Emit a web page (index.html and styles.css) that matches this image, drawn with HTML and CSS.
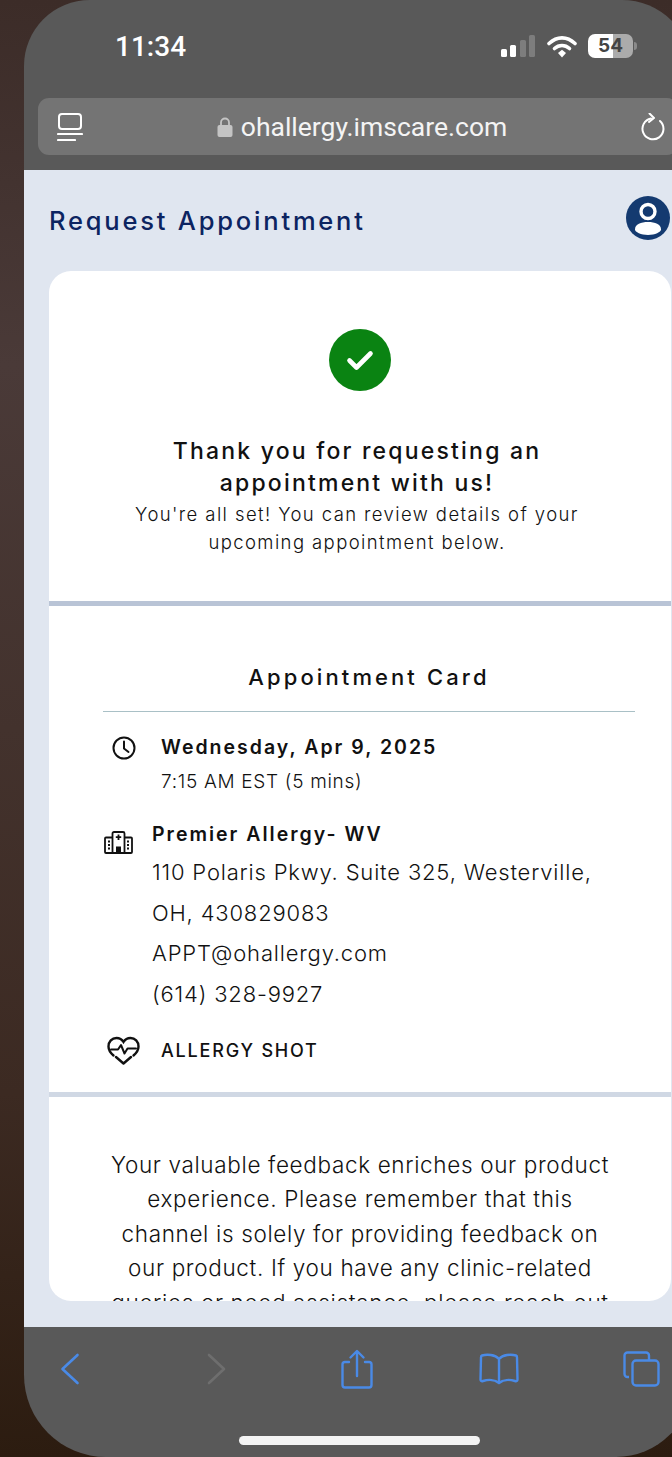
FILE: index.html

```html
<!DOCTYPE html>
<html lang="en">
<head>
    <meta charset="UTF-8">
    <meta name="viewport" content="width=device-width, initial-scale=1.0">
    <title>Request Appointment</title>
    <link rel="stylesheet" href="styles.css">
</head>
<body>
    <div class="phone">
        <div class="top-bar">
            <div class="status-row">
                <span class="clock-time">11:34</span>
                <svg class="signal" viewBox="0 0 34 22" width="34" height="22">
                    <rect x="0" y="14" width="6" height="8" rx="1.5" fill="#fff"/>
                    <rect x="9" y="10" width="6" height="12" rx="1.5" fill="#fff"/>
                    <rect x="19" y="5" width="6" height="17" rx="1.5" fill="#7d7d7d"/>
                    <rect x="28" y="0" width="6" height="22" rx="1.5" fill="#7d7d7d"/>
                </svg>
                <svg class="wifi" viewBox="0 0 30 23" width="30" height="23">
                    <path d="M2 8.5C10 1 20 1 28 8.5" fill="none" stroke="#fff" stroke-width="3.6" stroke-linecap="round"/>
                    <path d="M7.5 13.5C12 9.5 18 9.5 22.5 13.5" fill="none" stroke="#fff" stroke-width="3.6" stroke-linecap="round"/>
                    <path d="M11 18L15 14.8L19 18L15 22.5Z" fill="#fff"/>
                </svg>
                <div class="battery">
                    <span class="battery-body">54</span>
                    <span class="battery-nub"></span>
                </div>
            </div>
            <div class="url-bar">
                <svg viewBox="0 0 26 28" width="26" height="28">
                    <rect x="2" y="1" width="22" height="15" rx="3" fill="none" stroke="#fff" stroke-width="2"/>
                    <path d="M1 21H25M1 27H18" stroke="#fff" stroke-width="2.2" stroke-linecap="round"/>
                </svg>
                <div class="url-text">
                    <svg viewBox="0 0 16 20" width="16" height="20">
                        <path d="M4 9V5.5a4 4 0 0 1 8 0V9" fill="none" stroke="#c4c4c4" stroke-width="1.8"/>
                        <rect x="0.5" y="8" width="15" height="12" rx="2" fill="#c4c4c4"/>
                    </svg>
                    <span>ohallergy.imscare.com</span>
                </div>
                <svg viewBox="0 0 24 28" width="24" height="28">
                    <path d="M10 5.5A10.5 10.5 0 1 0 19 8" fill="none" stroke="#fff" stroke-width="2" stroke-linecap="round"/>
                    <path d="M8.5 0.5L13 5L8 9" fill="none" stroke="#fff" stroke-width="2" stroke-linecap="round" stroke-linejoin="round"/>
                </svg>
            </div>
        </div>

        <div class="main">
            <div class="page-header">
                <h1>Request Appointment</h1>
                <svg class="avatar" viewBox="0 0 44 44" width="44" height="44">
                    <circle cx="22" cy="22" r="22" fill="#143a70"/>
                    <circle cx="22" cy="15.500" r="7" fill="none" stroke="#fff" stroke-width="3.400"/>
                    <path d="M9 33.500C9 28 15 26 22 26C29 26 35 28 35 33.500C35 36 29 39 22 39C15 39 9 36 9 33.500Z" fill="#fff"/>
                </svg>
            </div>

            <div class="card">
                <div class="section thanks">
                    <div class="check-circle">
                        <svg viewBox="0 0 62 62" width="62" height="62">
                            <path d="M20.500 31.500L27.500 38.500L41.500 24.500" fill="none" stroke="#fff" stroke-width="4.600" stroke-linecap="round" stroke-linejoin="round"/>
                        </svg>
                    </div>
                    <h2>Thank you for requesting an<br>appointment with us!</h2>
                    <p>You're all set! You can review details of your<br>upcoming appointment below.</p>
                </div>

                <div class="section appointment">
                    <div class="appointment-title">Appointment Card</div>

                    <div class="row row-date">
                        <svg viewBox="0 0 24 24" width="24" height="24">
                            <circle cx="12" cy="12" r="10.500" fill="none" stroke="#111" stroke-width="2"/>
                            <path d="M12 5.500V12.500L16.500 16" fill="none" stroke="#111" stroke-width="2" stroke-linecap="round" stroke-linejoin="round"/>
                        </svg>
                        <div>
                            <div class="row-title">Wednesday, Apr 9, 2025</div>
                            <div class="row-time">7:15 AM EST (5 mins)</div>
                        </div>
                    </div>

                    <div class="row row-location">
                        <svg viewBox="0 0 29 23" width="29" height="23">
                            <path d="M8.500 22V2.500a1.500 1.500 0 0 1 1.500-1.500h9a1.500 1.500 0 0 1 1.500 1.500V22M8.500 6.500H2a1 1 0 0 0-1 1V21a1 1 0 0 0 1 1H27a1 1 0 0 0 1-1V7.500a1 1 0 0 0-1-1H20.500" fill="none" stroke="#111" stroke-width="1.800"/>
                            <path d="M14.500 3.500V9M11.800 6.200H17.200M4 10.500H6M4 14H6M4 17.500H6M23 10.500H25M23 14H25M23 17.500H25" stroke="#111" stroke-width="1.800"/>
                            <rect x="12" y="15.500" width="5" height="6.500" fill="#111"/>
                        </svg>
                        <div>
                            <div class="row-title location-name">Premier Allergy- WV</div>
                            <div class="address">110 Polaris Pkwy. Suite 325, Westerville,<br>OH, 430829083<br>APPT@ohallergy.com<br>(614) 328-9927</div>
                        </div>
                    </div>

                    <div class="row row-service">
                        <svg viewBox="0 0 33 29" width="33" height="29">
                            <path d="M6.500 19.500C3 16.500 1.500 14 1.500 10.500C1.500 5.500 5 2 9.500 2C12.500 2 15 3.500 16.500 6C18 3.500 20.500 2 23.500 2C28 2 31.500 5.500 31.500 10.500C31.500 14 30 16.500 26.500 19.500" fill="none" stroke="#111" stroke-width="2.400" stroke-linecap="round"/>
                            <path d="M4 13.500H11L14 9L17.500 17.500L20.500 12.500H29" fill="none" stroke="#111" stroke-width="2" stroke-linecap="round" stroke-linejoin="round"/>
                            <path d="M9 21L16.500 27.500L24 21" fill="none" stroke="#111" stroke-width="2.400" stroke-linecap="round" stroke-linejoin="round"/>
                        </svg>
                        <div class="service-name">ALLERGY SHOT</div>
                    </div>
                </div>

                <div class="feedback">
                    Your valuable feedback enriches our product<br>
                    experience. Please remember that this<br>
                    channel is solely for providing feedback on<br>
                    our product. If you have any clinic-related<br>
                    queries or need assistance, please reach out
                </div>
            </div>
        </div>

        <div class="bottom-bar">
            <div class="toolbar">
                <svg class="tool" viewBox="0 0 40 32" width="40" height="32">
                    <path d="M27.500 2L12.500 16L27.500 30" fill="none" stroke="#4a8ae6" stroke-width="2.600" stroke-linecap="round" stroke-linejoin="round"/>
                </svg>
                <svg class="tool" viewBox="0 0 40 32" width="40" height="32">
                    <path d="M14 2L29 16L14 30" fill="none" stroke="#6e6e6e" stroke-width="2.600" stroke-linecap="round" stroke-linejoin="round" transform="translate(2 0)"/>
                </svg>
                <svg class="tool" viewBox="0 0 40 40" width="40" height="40">
                    <path d="M12 13H8a2.500 2.500 0 0 0-2.500 2.500V36A2.500 2.500 0 0 0 8 38.500H32A2.500 2.500 0 0 0 34.500 36V15.500A2.500 2.500 0 0 0 32 13H28" fill="none" stroke="#4a8ae6" stroke-width="2.400" stroke-linecap="round" transform="translate(1 0)"/>
                    <path d="M21 27V2.500M14.500 8.500L21 2L27.500 8.500" fill="none" stroke="#4a8ae6" stroke-width="2.400" stroke-linecap="round" stroke-linejoin="round"/>
                </svg>
                <svg class="tool" viewBox="0 0 40 32" width="40" height="32">
                    <path d="M20 6C16 1.500 8 1 3 2.500C2 2.800 2 3.500 2 4.500L1.500 26.500C1.500 28 2.500 28.500 4 28C9 26.500 16 26.500 20 30C24 26.500 31 26.500 36 28C37.500 28.500 38.500 28 38.500 26.500L38 4.500C38 3.500 38 2.800 37 2.500C32 1 24 1.500 20 6V30" fill="none" stroke="#4a8ae6" stroke-width="2.400" stroke-linejoin="round"/>
                </svg>
                <svg class="tool" viewBox="0 0 40 36" width="40" height="36">
                    <path d="M7 26H5.500A3 3 0 0 1 2.500 23V4.500A3 3 0 0 1 5.500 1.500H24A3 3 0 0 1 27 4.500V9" fill="none" stroke="#4a8ae6" stroke-width="2.400"/>
                    <rect x="10.500" y="9.500" width="26" height="25" rx="3.500" fill="none" stroke="#4a8ae6" stroke-width="2.400"/>
                </svg>
            </div>
            <div class="home-indicator"></div>
        </div>
    </div>
</body>
</html>
```

FILE: styles.css

```css
html, body {
    margin: 0;
    height: 1457px;
    overflow: hidden;
}
body {
    font-family: Inter, "Noto Sans", sans-serif;
    background: linear-gradient(180deg, #3c2c28 0%, #4a3a38 25%, #3c2a22 75%, #2c1c10 100%);
    width: 672px;
}
.phone {
    width: 668px;
    height: 1457px;
    margin-left: 24px;
    border-radius: 66px 70px 76px 82px;
    overflow: hidden;
    display: flex;
    flex-direction: column;
    background: #595959;
}

/* safari chrome */
.top-bar {
    height: 170px;
    flex: none;
    color: #fff;
}
.status-row {
    height: 92px;
    margin-bottom: 6px;
    padding: 0 55px 0 91px;
    display: flex;
    align-items: center;
}
.clock-time {
    font-family: Roboto, sans-serif;
    font-size: 28px;
    font-weight: 500;
    margin-right: auto;
}
.signal {
    margin-right: 12px;
}
.wifi {
    margin-right: 11px;
}
.battery {
    display: flex;
    align-items: center;
}
.battery-body {
    width: 45px;
    height: 24px;
    border-radius: 7px;
    background: linear-gradient(90deg, #fff 0, #fff 25px, #ababab 25px);
    color: #444;
    font-size: 19px;
    font-weight: 700;
    line-height: 24px;
    text-align: center;
}
.battery-nub {
    width: 3px;
    height: 8px;
    margin-left: 1px;
    border-radius: 0 3px 3px 0;
    background: #8a8a8a;
}
.url-bar {
    height: 57px;
    margin: 0 14px;
    padding: 0 13px 0 19px;
    border-radius: 11px;
    background: #747474;
    display: flex;
    align-items: center;
    justify-content: space-between;
}
.url-text {
    display: flex;
    align-items: center;
    gap: 8px;
    font-family: Roboto, sans-serif;
    font-size: 26.500px;
    color: #f4f4f4;
}

/* page */
.main {
    height: 1157px;
    flex: none;
    background: #e0e6f0;
    overflow: hidden;
}
.page-header {
    height: 101px;
    padding: 0 22px 0 25px;
    display: flex;
    align-items: center;
    justify-content: space-between;
}
.page-header h1 {
    margin: 0;
    font-size: 25.500px;
    font-weight: 500;
    letter-spacing: 2.800px;
    color: #0c2461;
}
.avatar {
    margin-top: -6px;
}
.card {
    width: 622px;
    height: 1030px;
    margin-left: 25px;
    border-radius: 22px;
    background: #fff;
    overflow: hidden;
    color: #111;
}
.section {
    border-bottom: 5px solid #d0d8e4;
}
.thanks {
    height: 330px;
    border-bottom-color: #b9c4d6;
    text-align: center;
    padding-right: 6px;
}
.check-circle {
    width: 62px;
    height: 62px;
    margin: 0 auto;
    position: relative;
    top: 58px;
    left: 3px;
    border-radius: 50%;
    background: #0a8312;
}
.thanks h2 {
    margin: 102px 0 0;
    font-size: 23px;
    font-weight: 500;
    line-height: 32px;
    letter-spacing: 2.200px;
}
.thanks p {
    margin: 1px 0 0;
    font-size: 18.500px;
    font-weight: 300;
    line-height: 28px;
    letter-spacing: 1.400px;
}
.appointment {
    box-sizing: border-box;
    height: 491px;
    padding-top: 56px;
}
.appointment-title {
    margin: 0 36px 21px 54px;
    padding-bottom: 19px;
    border-bottom: 1px solid #a9c0c6;
    text-align: center;
    font-size: 22px;
    font-weight: 500;
    line-height: 30px;
    letter-spacing: 3.100px;
}
.row {
    display: flex;
    align-items: flex-start;
}
.row-date {
    padding-left: 63px;
    gap: 25px;
}
.row-date svg {
    margin-top: 3px;
}
.row-title {
    font-size: 19.500px;
    font-weight: 600;
    line-height: 28px;
    letter-spacing: 2px;
}
.row-time {
    margin-top: 7px;
    font-size: 19px;
    font-weight: 300;
    line-height: 28px;
    letter-spacing: 0.700px;
}
.row-location {
    margin-top: 24px;
    padding-left: 55px;
    gap: 19px;
}
.row-location svg {
    margin-top: 11px;
}
.location-name {
    margin-bottom: 4px;
}
.address {
    font-size: 22px;
    font-weight: 300;
    line-height: 40.700px;
    letter-spacing: 0.820px;
    white-space: nowrap;
}
.row-service {
    margin-top: 21px;
    padding-left: 58px;
    gap: 21px;
    align-items: center;
}
.service-name {
    font-size: 18px;
    font-weight: 500;
    letter-spacing: 1.800px;
}
.feedback {
    padding: 51px 0 0 0;
    text-align: center;
    font-size: 22.500px;
    font-weight: 300;
    line-height: 34.400px;
    letter-spacing: 0.650px;
    white-space: nowrap;
}

/* bottom toolbar */
.bottom-bar {
    flex: 1;
}
.toolbar {
    height: 84px;
    padding-left: 26px;
    display: flex;
    align-items: center;
    gap: 103px;
}
.tool {
    flex: none;
}
.home-indicator {
    width: 241px;
    height: 9px;
    margin: 25px 0 0 215px;
    border-radius: 5px;
    background: #f4f4f4;
}
```
